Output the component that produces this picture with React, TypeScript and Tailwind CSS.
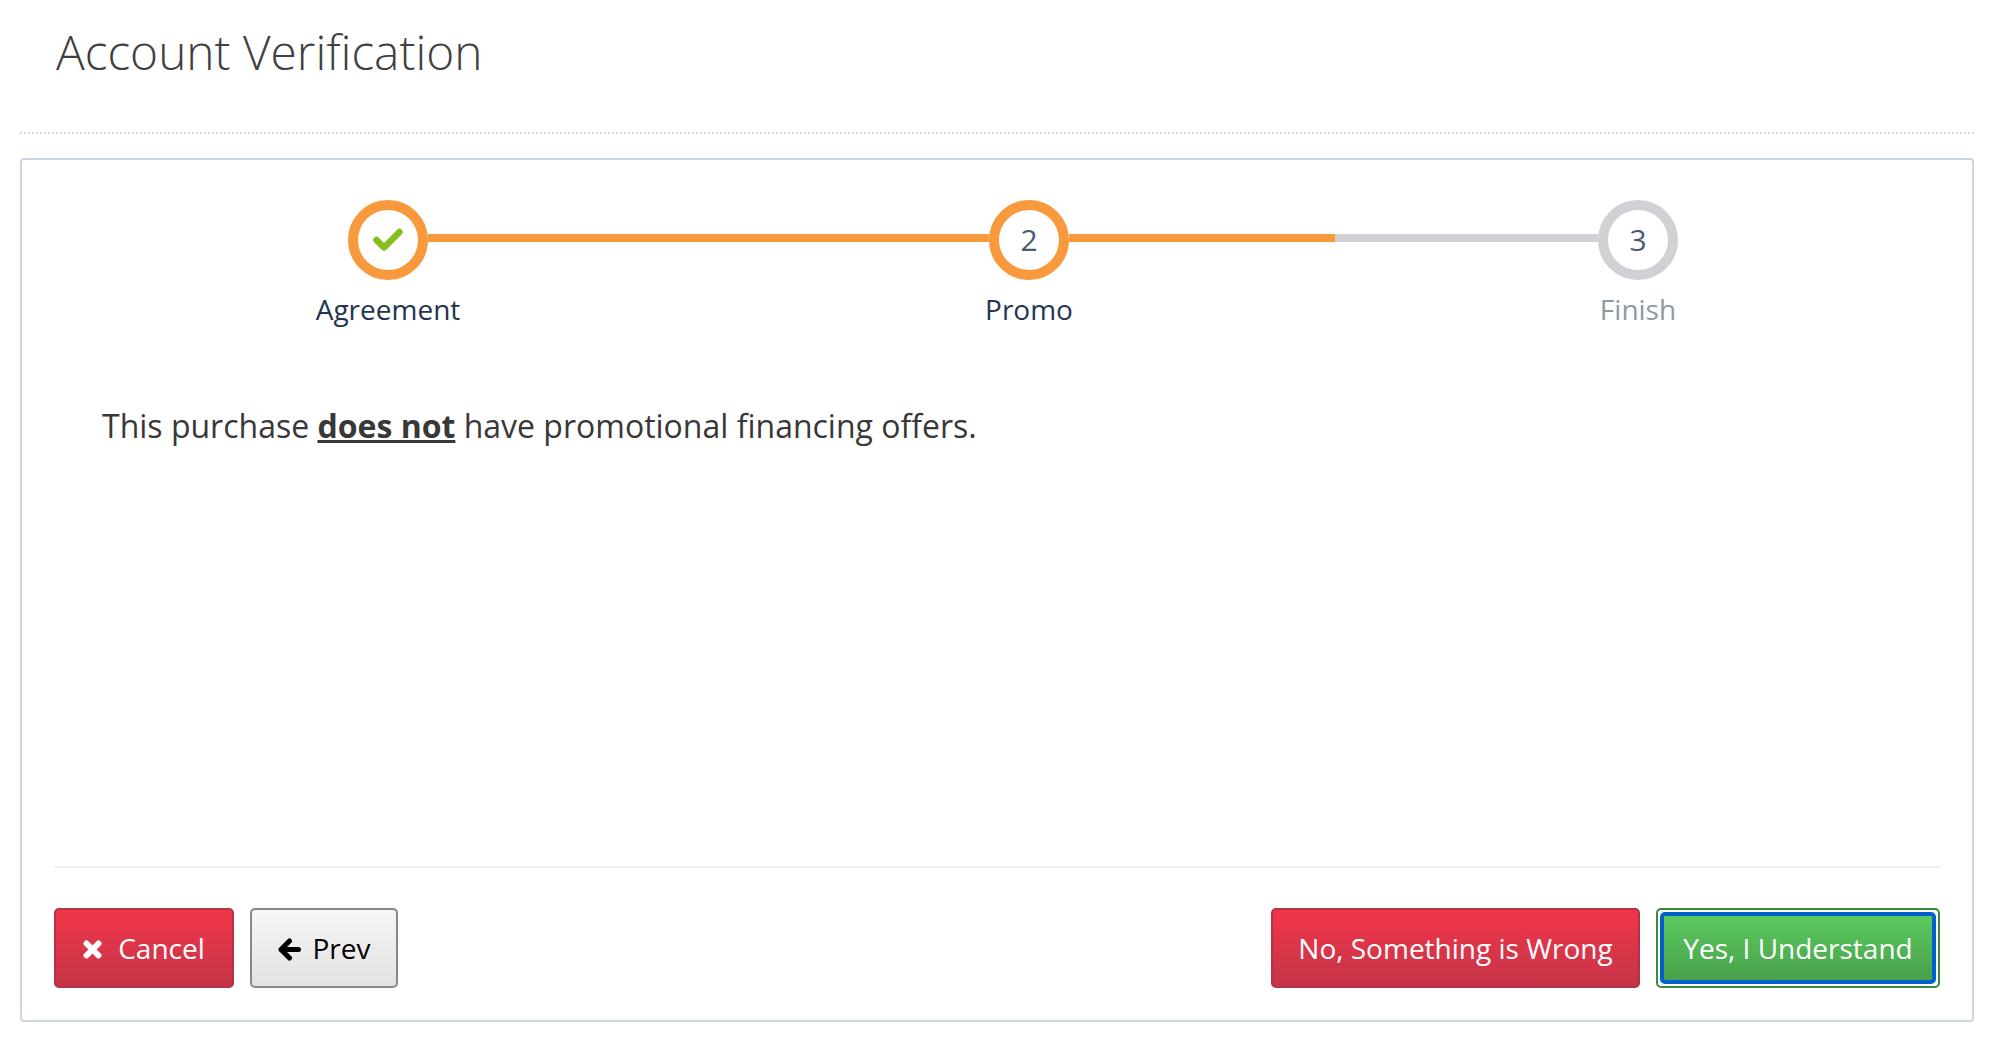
import React from "react";

function Circle({ color, children }: { color: string; children: React.ReactNode }) {
  return (
    <div className={`w-20 h-20 shrink-0 rounded-full border-[10px] bg-white flex items-center justify-center pb-[2px] text-[30px] text-[#4a5a70] ${color}`}>
      {children}
    </div>
  );
}

export default function App() {
  return (
    <div className="w-[1990px] h-[1048px] bg-white overflow-hidden pl-5 pr-4 font-['Open_Sans',sans-serif]">
      <div className="h-[134px] border-b-2 border-dotted border-[#d9d9d9] pl-9 pt-[19px]">
        <h1 className="text-[47.8px] leading-[66px] font-light text-[#404040]">Account Verification</h1>
      </div>
      <div className="mt-[24px] h-[864px] border-2 border-[#cbd6e2] rounded-[4px] flex flex-col">
        <div className="pt-[40px] pl-[326px] flex items-start">
          <Circle color="border-[#f9993e]">
            <svg viewBox="0 0 30 23" className="w-[30px] h-[23px]" fill="none" stroke="#86bc1b" strokeWidth="6.5" strokeLinecap="round" strokeLinejoin="round">
              <polyline points="3.5,12 11,19.5 26.5,4" />
            </svg>
          </Circle>
          <div className="w-[561px] h-2 mt-[34px] bg-[#f9993e]" />
          <Circle color="border-[#f9993e]">2</Circle>
          <div className="w-[266px] h-2 mt-[34px] bg-[#f9993e]" />
          <div className="w-[263px] h-2 mt-[34px] bg-[#d0d1d5]" />
          <Circle color="border-[#d0d1d5]">3</Circle>
        </div>
        <div className="pl-[266px] mt-[10px] flex text-[28px] leading-[38px] text-[#243550]">
          <div className="w-[200px] text-center">Agreement</div>
          <div className="w-[200px] ml-[441px] text-center">Promo</div>
          <div className="w-[200px] ml-[409px] text-center text-[#8e99a6]">Finish</div>
        </div>
        <p className="pl-20 mt-[76px] text-[32px] leading-[44px] text-[#383838]">
          This purchase <b className="underline font-bold">does not</b> have promotional financing offers.
        </p>
        <div className="mt-auto mx-8 mb-[32px] pt-[40px] border-t-2 border-[#eceef0] flex items-stretch gap-4 text-[28px] h-[122px]">
          <button className="w-[180px] rounded-[5px] border-2 border-[#b23347] bg-gradient-to-b from-[#f23549] to-[#c53448] text-white flex items-center justify-center gap-4">
            <svg viewBox="0 0 19 19" className="w-[19px] h-[19px] mt-[2px]" fill="none" stroke="white" strokeWidth="6" strokeLinecap="round">
              <path d="M3.5 3.5 L15.5 15.5 M15.5 3.5 L3.5 15.5" />
            </svg>
            Cancel
          </button>
          <button className="w-[148px] rounded-[5px] border-2 border-[#888888] bg-gradient-to-b from-[#f6f6f6] to-[#e2e2e2] text-black flex items-center justify-center gap-[12px]">
            <svg viewBox="0 0 23 23" className="w-[23px] h-[23px] mt-[2px]" fill="none" stroke="black" strokeWidth="5" strokeLinecap="round" strokeLinejoin="round">
              <path d="M11.5 3 L3 11.5 L11.5 20 M3 11.5 L20.5 11.5" />
            </svg>
            Prev
          </button>
          <div className="flex-1" />
          <button className="w-[369px] rounded-[5px] border-2 border-[#b23347] bg-gradient-to-b from-[#f23549] to-[#c53448] text-white">
            No, Something is Wrong
          </button>
          <button className="w-[284px] rounded-[5px] border-2 border-[#3a8a3d] bg-white p-[2px] flex">
            <span className="flex-1 rounded-[5px] border-4 border-[#0060cc] bg-gradient-to-b from-[#5bc95f] to-[#49a14c] text-white flex items-center justify-center">
              Yes, I Understand
            </span>
          </button>
        </div>
      </div>
    </div>
  );
}
